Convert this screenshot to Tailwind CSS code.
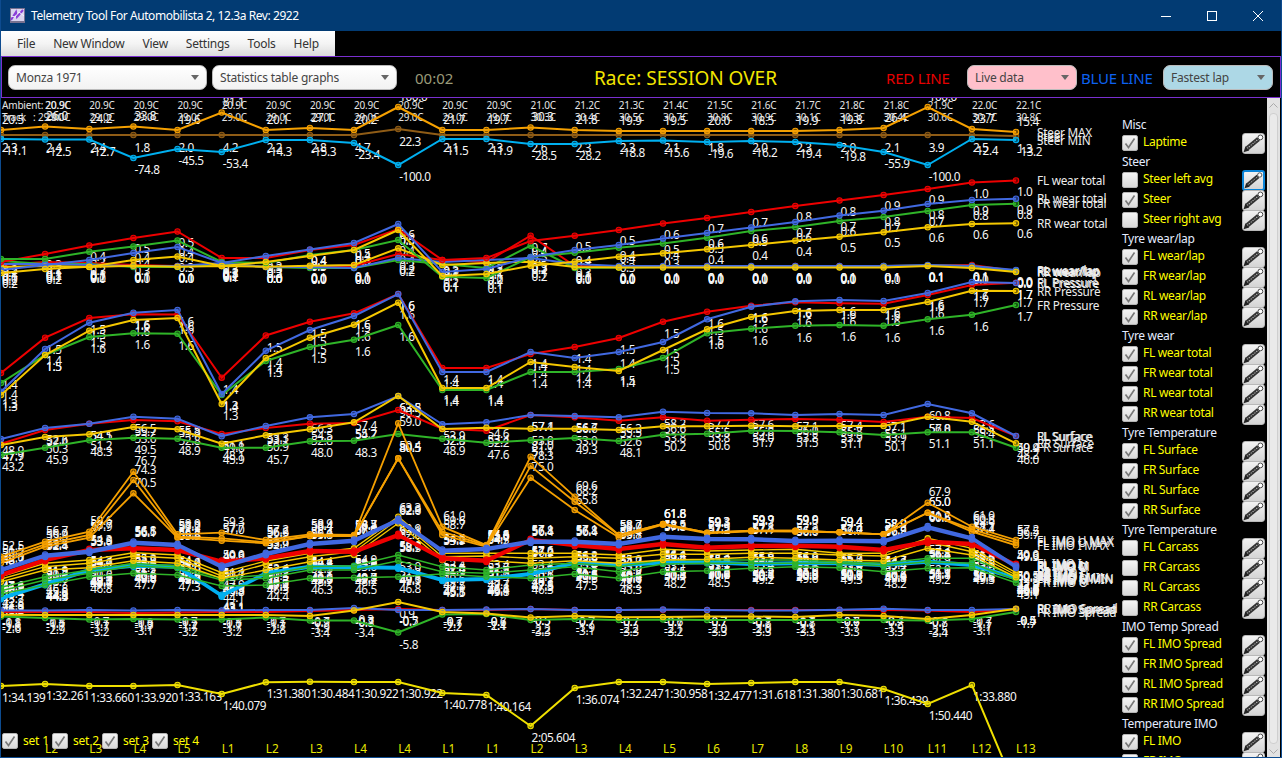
<!DOCTYPE html>
<html lang="en">
<head>
<meta charset="utf-8">
<title>Telemetry Tool</title>
<script src="https://cdn.jsdelivr.net/npm/@tailwindcss/browser@4"></script>
</head>
<body class="bg-black">
<div class="relative w-[1282px] h-[758px] flex flex-col overflow-hidden bg-black border-x border-b border-[#0d4b8f] text-[12px] [font-family:'Noto_Sans',sans-serif]">
  <header class="h-[31px] shrink-0 flex items-center bg-[#023b73] text-white pl-[9px]">
    <svg width="15" height="15" viewBox="0 0 15 15"><rect width="15" height="15" fill="#77718f"/><rect x="1" y="1" width="13" height="12" fill="#d9d4ee"/><path d="M1 12 L6 4 L7 9 L13 2" stroke="#8a3fd8" stroke-width="2" fill="none"/><path d="M1 8 L5 9 L9 4 L14 8" stroke="#f2f2ff" stroke-width="1" fill="none"/></svg>
    <span class="ml-[6px] tracking-[-0.43px]">Telemetry Tool For Automobilista 2, 12.3a Rev: 2922</span>
    <div class="ml-auto flex">
      <div class="w-[46px] h-[31px] flex items-center justify-center"><svg width="10" height="10"><path d="M0 5.5H10" stroke="#fff"/></svg></div>
      <div class="w-[46px] h-[31px] flex items-center justify-center"><svg width="10" height="10"><rect x=".5" y=".5" width="9" height="9" fill="none" stroke="#fff"/></svg></div>
      <div class="w-[46px] h-[31px] flex items-center justify-center"><svg width="10" height="10"><path d="M0 0L10 10M10 0L0 10" stroke="#fff"/></svg></div>
    </div>
  </header>
  <nav class="w-[334px] h-[25px] shrink-0 flex items-center pl-[16px] gap-[18px] bg-linear-to-b from-white via-[#f4f4f4] to-[#dcdcdc] text-[#333] tracking-[-0.24px]">
    <span>File</span><span>New Window</span><span>View</span><span>Settings</span><span>Tools</span><span>Help</span>
  </nav>
  <section class="h-[42px] shrink-0 flex items-center border border-[#7a2fd0] bg-black pl-[6px]">
    <div class="w-[199px] h-[25px] flex items-center justify-between rounded-[7px] border border-[#bbb] bg-linear-to-b from-white to-[#f2f2f2] pl-[7px] pr-[7px] text-[#444]"><span class="pt-[2px] tracking-[-0.2px]">Monza 1971</span><svg width="8" height="5"><path d="M0 0H8L4 5Z" fill="#666"/></svg></div>
    <div class="ml-[5px] w-[185px] h-[25px] flex items-center justify-between rounded-[7px] border border-[#bbb] bg-linear-to-b from-white to-[#f2f2f2] pl-[7px] pr-[7px] text-[#444]"><span class="pt-[2px] tracking-[-0.2px]">Statistics table graphs</span><svg width="8" height="5"><path d="M0 0H8L4 5Z" fill="#666"/></svg></div>
    <span class="ml-[18px] w-[179px] pt-[2px] text-[15px] text-[#9a9a78]">00:02</span>
    <span class="w-[292px] pt-[2px] text-[19px] text-[#f2e600] tracking-[-0.02px]">Race: SESSION OVER</span>
    <span class="w-[81px] pt-[2px] text-[15px] text-[#e60000] tracking-[-0.2px]">RED LINE</span>
    <div class="w-[110px] h-[25px] flex items-center justify-between rounded-[7px] border border-[#bbb] bg-[#ffc0cb] pl-[7px] pr-[7px] text-[#444]"><span class="pt-[2px] tracking-[-0.2px]">Live data</span><svg width="8" height="5"><path d="M0 0H8L4 5Z" fill="#666"/></svg></div>
    <span class="w-[86px] pl-[4px] pt-[2px] text-[15px] text-[#0d62f0] tracking-[-0.2px] whitespace-nowrap">BLUE LINE</span>
    <div class="w-[110px] h-[25px] flex items-center justify-between rounded-[7px] border border-[#bbb] bg-[#add8e6] pl-[7px] pr-[7px] text-[#444]"><span class="pt-[2px] tracking-[-0.2px]">Fastest lap</span><svg width="8" height="5"><path d="M0 0H8L4 5Z" fill="#666"/></svg></div>
  </section>
  <main class="flex-1 min-h-0 flex">
    <svg id="chart" width="1119" height="659" viewBox="1 98 1119 659" class="shrink-0"></svg>
    <aside id="side" class="w-[145px] shrink-0 pl-[2px] pt-[17px] overflow-hidden text-[#ffff00] tracking-[-0.32px]"></aside>
    <div class="ml-[2px] w-[13px] shrink-0 flex flex-col items-center bg-[#e2e2e2]">
      <svg class="mt-[5px] mb-[5px]" width="9" height="5"><path d="M.5 4.5L4.5 .5L8.5 4.5" fill="none" stroke="#aaa"/></svg>
      <div class="flex-1 w-[9px] rounded-[4px] border border-[#cfcfcf] bg-[#eaeaea]"></div>
      <svg class="mt-[5px] mb-[3px]" width="9" height="5"><path d="M.5 .5L4.5 4.5L8.5 .5" fill="none" stroke="#aaa"/></svg>
    </div>
  </main>
  <div id="sets" class="absolute left-[1px] top-[733px] flex text-[#ffff00] tracking-[-0.2px]"></div>
</div>
<script>
const CHECK='<svg width="14" height="14" viewBox="0 0 14 14"><path d="M2.5 7.5L5.5 11.5L11.5 2.5" fill="none" stroke="#777" stroke-width="1.6"/></svg>';
const box=(on)=>`<span class="shrink-0 w-[16px] h-[16px] mt-[2px] flex items-center justify-center rounded-[2px] border border-[#b4b4b4] bg-linear-to-b from-[#f4f4f4] to-[#d8d8d8]">${on?CHECK:''}</span>`;
const PENCIL='<svg width="21" height="19" viewBox="0 0 21 19"><path d="M4 14.5L15.5 5" stroke="#333" stroke-width="4.6"/><path d="M4 14.5L15.5 5" stroke="#b8b8b8" stroke-width="1.1" stroke-dasharray="1.3 1.1"/><path d="M.6 18.2L2.4 12.2L6.2 16.4Z" fill="#222"/><circle cx="17.4" cy="3.4" r="2.4" fill="#fff" stroke="#444"/></svg>';
const rows=[["Misc"],["Laptime",1],["Steer"],["Steer left avg",0,1],["Steer",1],["Steer right avg",0],["Tyre wear/lap"],["FL wear/lap",1],["FR wear/lap",1],["RL wear/lap",1],["RR wear/lap",1],["Tyre wear"],["FL wear total",1],["FR wear total",1],["RL wear total",1],["RR wear total",1],["Tyre Temperature"],["FL Surface",1],["FR Surface",1],["RL Surface",1],["RR Surface",1],["Tyre Temperature"],["FL Carcass",0],["FR Carcass",0],["RL Carcass",0],["RR Carcass",0],["IMO Temp Spread"],["FL IMO Spread",1],["FR IMO Spread",1],["RL IMO Spread",1],["RR IMO Spread",1],["Temperature IMO"],["FL IMO",1],["FR IMO",0]];
document.getElementById('side').innerHTML=rows.map(r=>r.length==1
 ?`<div class="mt-[3px] h-[14px] flex items-center text-[#e4ecff]">${r[0]}</div>`
 :`<div class="h-[20px] flex items-center">${box(r[1])}<span class="ml-[5px] whitespace-nowrap">${r[0]}</span><span class="ml-auto mt-[3px] shrink-0 w-[23px] h-[21px] flex items-center justify-center rounded-[3px] border bg-linear-to-b from-[#f2f2f2] to-[#d4d4d4] ${r[2]?'border-[#0a84d8] border-2':'border-[#b8b8b8]'}">${PENCIL}</span></div>`).join('');
document.getElementById('sets').innerHTML=[1,2,3,4].map(n=>`<div class="w-[50px] h-[16px] flex items-center">${box(1).replace('mt-[2px]','')}<span class="ml-[5px] whitespace-nowrap">set ${n}</span></div>`).join('');

const X=i=>1+44.13*i;
const RED='#ee0000',GRN='#2fb428',BLU='#4169e1',YEL='#f5c800',ORG='#f5a000',BRN='#8f5c16',CYA='#00b0f0',LAP='#f0e000';
const lin=(y0,v0,k)=>y=>(v0-(y-y0)*k).toFixed(1);
const S=[];
const add=(n,c,y,l,o=16,w=2)=>S.push({n,c,y,l,o,w});
const v3=(b,a)=>a.map(v=>b+v/3);

// steer
const sMax=[20.5,26.0,24.2,33.8,19.6,81.1,20.1,27.1,20.2,100.0,21.7,19.7,30.3,21.8,19.9,19.5,20.0,18.5,19.9,19.8,26.4,100.0,23.7,15.4];
const sMid=[2.3,2.4,2.4,1.8,2.0,4.2,2.2,2.8,4.7,22.3,2.1,2.3,2.6,2.3,2.3,2.1,1.8,2.0,2.3,2.0,2.1,3.9,2.5,1.3];
const sMin=[-11.1,-12.5,-12.7,-74.8,-45.5,-53.4,-14.3,-15.3,-23.4,-100.0,-11.5,-11.9,-28.5,-28.2,-18.8,-15.6,-19.6,-16.2,-19.4,-19.8,-55.9,-100.0,-12.4,-13.2];
add('Steer',BRN,[135,135,135,135,135,135,135,135,135,129,135,135,135,135,135,135,135,135,135,135,135,135,135,136],(y,i)=>sMid[i].toFixed(1),17);
add('Steer MAX',ORG,[130,126.5,129,126.5,130,112.5,130,128,130,107,130,130,127.5,130,131,131,131,131,131,130,128,107,129,132],(y,i)=>sMax[i].toFixed(1),-6.5);
add('Steer MIN',CYA,[139,139.5,139.5,158,149,152,140,140,143,165,139,139,144,144,141,140.5,142,141,142,145,152,165,139,140],(y,i)=>sMin[i].toFixed(1),16);

// wear per lap
const wl=y=>Math.max(0,0.05+(266.5-y)*.02).toFixed(1);
add('FL wear/lap',RED,[265,262,263,265,266,264,267,267,266,254,260,262,235.7,266,267,266.5,266,266.5,266,266,266,265.5,265,271],wl);
add('FR wear/lap',GRN,[261,264,264,267,267,264,267,268,268,260,264,268,245.7,268,267.5,267,267,267,267,267,266,265.5,266,271],wl);
add('RL wear/lap',BLU,[264,264,265,266,266,263,267,267,268,258,262,260,258,264,266,266,266,266,266,266,266,265,266,270],wl);
add('RR wear/lap',YEL,[267,266,267,265.7,266.7,266,266.7,265.7,265,248.3,265,263,261.7,267,267.5,267.5,267.5,267.5,267.5,267.5,267.5,266,268,272],wl);
// wear total
add('FL wear total',RED,[262,254,245.5,238,231.5,258,258,250,245,229,260,258,241,235.7,230,223.5,218,212,206,200.5,195,189,182.5,180.5],lin(180.5,1,.0093),15);
add('FR wear total',GRN,[259,259,251.7,246.5,240.5,262,263,255,250,240,276.7,278,257,252.7,247.7,243.5,237.7,231,227,221,217,211,205,203.7],lin(203.7,.8,.01),15);
add('RL wear total',BLU,[270,265,260,253,247,263,256,249.5,243,224,272,269,257,250,245,238.5,233,227.5,222,215.6,210.7,204,200,198.7],lin(198.7,.9,.01),15);
add('RR wear total',YEL,[273,269,266.7,260,256.5,266,262,256,250,230,276,274,265.7,261.7,256.7,253.3,249.3,245,240.7,236.7,232.3,227.3,224,223.3],lin(223.3,.6,.009),15);
// pressure
add('FL Pressure',RED,[373,337.7,318,314.3,314.5,377.7,335.5,321.7,313.3,294,368,368,354,347,338,321.7,311.7,305.7,302.3,303.3,303.7,295,285,282.7],lin(300,1.6,.0032));
add('FR Pressure',GRN,[383,355,337,333.3,333.7,395,361,347,339.7,325,390,390,372,372,369,358,333.3,328.7,325.7,325,325.7,319.3,314.7,305],lin(325,1.6,.0032));
add('RL Pressure',BLU,[391.7,349,322.7,312.7,310,394,350.7,330,316,294,372,372,352,358,352,342,319.3,306.7,301.3,300,301,293,282,283],lin(300,1.6,.0032));
add('RR Pressure',YEL,[395,355,330.7,320,318,404,358,337.7,324.7,302.7,388,388,362,367,371,350,329.3,317,311,310,310,302,290.7,291],lin(310,1.6,.0032));
// surface
add('FL Surface',RED,[443.7,430,423.7,420,421.3,434,428,423.7,423,410,428.7,430.7,415,417.3,420.7,417.3,420.7,419.7,419,419.7,422,416.7,418,436],lin(416.7,56.8,.33));
const gs=[43.2,45.9,48.3,49.5,48.9,45.9,45.7,48.0,48.3,50.4,48.9,47.6,51.1,49.3,48.1,50.2,50.6,51.7,51.5,51.1,50.1,51.1,51.1,46.0];
add('FR Surface',GRN,[455,447.7,440.3,437.7,438.7,447.7,447.7,441.3,440.7,434,438.7,442.7,440.3,438,441,434.7,433.7,430.7,431,432.3,435,432.3,432.3,447.7],(y,i)=>gs[i].toFixed(1));
add('RL Surface',BLU,[439,428,423.7,416.7,418.7,436.3,426,417.3,414,396,424.3,422.3,415,416,417.3,411.7,413,413.3,415,414,415,404,413.3,436],lin(404,60.8,.34));
add('RR Surface',YEL,[445,437,434.3,427,429.3,443.7,435.3,429.3,422.3,396,429,427.7,428.7,428.7,430,426.3,426.3,425.7,426.3,426,426,416.7,421.7,443.3],lin(416.7,57,.33));
// IMO
const imo=lin(471.7,76.7,.285);
const O=[[556.7,541.7,531.7,471.7,534.3,532.7,540,534.3,535,423.3,526.7,545,456.7,496.7,535,524,532.7,530.7,530.7,532.3,534.3,502.7,526.7,540],
 [560,544.3,535,480,536.7,538.3,542.3,536,535.7,458.3,531.7,545.7,466,501.7,535,524,532.7,530.7,530.7,532.3,534.3,512.7,529.3,542.7],
 [563,546.7,537.7,493.3,537.7,540.7,543.3,536,536,458.3,535,546.7,477.7,510,537.3,524.7,533.3,531.3,531.7,532.3,534.3,512.7,531.7,545.3]];
const cy=v3(400,[595,553,510,497,500,587,520,500,502,503,540,537,522,488,495,488,487,492,490,490,495,485,495,535]);
const cyl=(y,i)=>i==0?'46.3':i==5?'43.1':imo(y);
['FR IMO I MIN','FR IMO O MIN','FR IMO U MIN'].forEach((n,k)=>add(n,CYA,cy.map(v=>v+k-1),cyl));
const gi=[[562,530,510,490,498,535,525,500,497,465,500,510,495,490,500,480,480,480,480,485,490,475,475,530],
 [572,540,520,497,505,540,535,510,510,482,515,520,510,500,515,492,490,490,490,490,497,485,490,540],
 [582,555,530,520,525,558,555,535,533,530,522,530,535,522,535,515,512,505,500,503,515,505,503,548]];
['FR IMO I','FR IMO M','FR IMO O'].forEach((n,k)=>add(n,GRN,v3(400,gi[k]),imo,16,1.5));
const yl=[[530,490,480,458,465,518,483,460,445,350,460,460,460,460,465,448,453,450,448,460,460,415,445,518],
 [537,500,490,468,475,528,493,470,455,358,470,468,475,470,475,463,463,460,460,465,468,425,455,525],
 [545,510,503,482,490,535,510,485,465,370,480,482,490,482,490,480,478,472,475,480,483,445,465,532]];
['RR IMO I','RR IMO U','RR IMO M'].forEach((n,k)=>add(n,YEL,v3(400,yl[k]),imo,16,1.4));
['FL IMO U MAX','FL IMO O MAX','FL IMO I MAX'].forEach((n,k)=>add(n,ORG,O[k],imo,-6.5,1.8));
const rd=v3(400,[525,480,450,445,450,485,475,453,455,405,475,482,420,435,447,432,443,438,437,440,450,425,432,495]);
['FL IMO I','FL IMO M','FL IMO O'].forEach((n,k)=>add(n,RED,rd.map(v=>v+(k-1)*1.2),imo));
const bl=v3(400,[510,467,455,428,435,500,462,432,422,360,452,447,425,425,432,410,417,418,423,422,424,382,415,500]);
['RL IMO I','RL IMO M','RL IMO O'].forEach((n,k)=>add(n,BLU,bl.map(v=>v+(k-1)*1.2),imo,-6.5));
// spread
const sp=lin(610,-.7,.2);
add('FL IMO Spread',RED,[612,612,612,613,612.5,612,612,611,610,609,610,610,609,610,610,610,610,610,610,610,610,610.5,612,609],sp);
const gsl=lin(618,-2.9,.2);
add('FR IMO Spread',GRN,[616.5,618,619.5,619,619.5,619.5,617.5,620.5,620.5,632.5,614.5,614,620,619,620,619.5,620,620,620,620,620,620.5,619,612],gsl);
add('RL IMO Spread',BLU,[610.5,610.5,610,610.5,610,610.5,610,610,608,610,610,609.5,609,610,610,609.5,610,610.5,610.5,609.7,608.7,610,610,609],sp);
add('RR IMO Spread',YEL,[614.7,615,615,615,615,615,615,616,610.5,602,612,613.5,617.5,616,617.3,617,616.5,616.5,617,615,616,619,615,608.7],sp);
// laptime
const lt=['1:34.139','1:32.261','1:33.660','1:33.920','1:33.163','1:40.079','1:31.380','1:30.484','1:30.922','1:30.922','1:40.778','1:40.164','2:05.604','1:36.074','1:32.247','1:30.958','1:32.477','1:31.618','1:31.380','1:30.681','1:36.439','1:50.440','1:33.880',''];
add('',LAP,[686,684,686,686,685,694,682.3,681.7,682,682,693,695,726,688,682,682,684,683,682,682,689,704,685,790],(y,i)=>lt[i]);

const FS=11.8, FF="'Noto Sans',sans-serif";
let labels='',lines='',names='';
for(const s of S){
  s.y.forEach((y,i)=>{const t=s.l(y,i);if(t)labels+=`<text x="${(X(i)+1).toFixed(1)}" y="${(y+s.o).toFixed(1)}">${t}</text>`;});
  if(s.n)names+=`<text x="1037" y="${(s.y[23]+4.5).toFixed(1)}">${s.n}</text>`;
  lines+=`<polyline points="${s.y.map((y,i)=>X(i).toFixed(1)+','+y.toFixed(1)).join(' ')}" fill="none" stroke="${s.c}" stroke-width="${s.w}"/>`;
  lines+=s.y.map((y,i)=>`<circle cx="${X(i).toFixed(1)}" cy="${y.toFixed(1)}" r="2.7" fill="${s.c}" fill-opacity=".5" stroke="${s.c}" stroke-width="1.1"/>`).join('');
}
const amb=[20.9,20.9,20.9,20.9,20.9,20.9,20.9,20.9,20.9,20.9,20.9,21.0,21.2,21.3,21.4,21.5,21.6,21.7,21.8,21.8,21.9,22.0,22.1];
const trk=[29.0,29.0,29.0,29.0,29.0,29.0,29.0,29.0,29.0,29.0,29.0,30.3,30.4,30.5,30.7,30.8,30.9,30.1,30.3,30.4,30.6,30.7,30.8];
let temps=`<text x="2" y="109.3">Ambient: 20.9C</text><text x="2" y="120.5" xml:space="preserve">Track   : 29.0C</text>`;
amb.forEach((v,k)=>{temps+=`<text x="${X(k+1).toFixed(1)}" y="109.3">${v.toFixed(1)}C</text><text x="${X(k+1).toFixed(1)}" y="120.5">${trk[k].toFixed(1)}C</text>`;});
const laps=['L2','L3','L4','L5','L1','L2','L3','L4','L4','L1','L1','L2','L3','L4','L5','L6','L7','L8','L9','L10','L11','L12','L13'];
const lapT=laps.map((t,k)=>`<text x="${X(k+1).toFixed(1)}" y="752.5">${t}</text>`).join('');
document.getElementById('chart').innerHTML=
 `<g font-family="${FF}" font-size="${FS}" fill="#f6f6f6" letter-spacing="-0.42">${labels}</g>`+
 `<g font-family="${FF}" font-size="10" fill="#e6e6e6" letter-spacing="-0.18">${temps}</g>`+
 lines+
 `<g font-family="${FF}" font-size="${FS}" fill="#ededed" letter-spacing="-0.24">${names}</g>`+
 `<g font-family="${FF}" font-size="${FS}" fill="#e8e800">${lapT}</g>`;
</script>
</body>
</html>
